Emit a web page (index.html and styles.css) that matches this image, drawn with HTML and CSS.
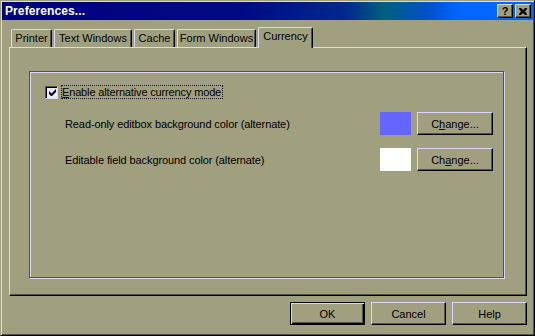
FILE: index.html
```html
<!DOCTYPE html>
<html lang="en">
<head>
    <meta charset="UTF-8">
    <title>Preferences...</title>
    <link rel="stylesheet" href="styles.css">
</head>
<body>
    <div class="window">
        <div class="titlebar">
            <span class="title">Preferences...</span>
            <div class="caption-buttons">
                <button class="cap-btn">?</button>
                <button class="cap-btn">
                    <svg width="8" height="7" viewBox="0 0 8 7">
                        <path d="M0 0h2l2 2 2-2h2v1L6 3.5 8 6v1H6L4 5 2 7H0V6l2-2.5L0 1z" fill="#000"/>
                    </svg>
                </button>
            </div>
        </div>
        <div class="client">
            <div class="tabs">
                <div class="tab tab-printer">Printer</div>
                <div class="tab tab-text">Text Windows</div>
                <div class="tab tab-cache">Cache</div>
                <div class="tab tab-form">Form Windows</div>
                <div class="tab tab-currency selected">Currency</div>
            </div>
            <div class="panel">
                <div class="groupbox">
                    <div class="check-row">
                        <span class="checkbox">
                            <svg width="7" height="7" viewBox="0 0 7 7">
                                <path d="M0 2v3l2 2h1l4-4V0L2.5 4.5z" fill="#000"/>
                            </svg>
                        </span>
                        <span class="focus-label"><u>E</u>nable alternative currency mode</span>
                    </div>
                    <div class="color-row">
                        <span class="row-label">Read-only editbox background color (alternate)</span>
                        <span class="swatch swatch-blue"></span>
                        <button class="btn">C<u>h</u>ange...</button>
                    </div>
                    <div class="color-row">
                        <span class="row-label">Editable field background color (alternate)</span>
                        <span class="swatch swatch-white"></span>
                        <button class="btn">Ch<u>a</u>nge...</button>
                    </div>
                </div>
            </div>
            <div class="footer">
                <button class="btn btn-footer btn-default">OK</button>
                <button class="btn btn-footer">Cancel</button>
                <button class="btn btn-footer">Help</button>
            </div>
        </div>
    </div>
</body>
</html>
```

FILE: styles.css
```css
body {
    margin: 0;
    background-color: #a09f80;
    font-family: "Liberation Sans", Arial, sans-serif;
    font-size: 11px;
    color: #000;
}
.window {
    width: 535px;
    height: 336px;
    box-sizing: border-box;
    padding: 1px;
    background-color: #a09f80;
    border: 1px solid;
    border-color: #a09f80 #000 #000 #a09f80;
    box-shadow: inset 1px 1px 0 #d8d8f8, inset -1px -1px 0 #55553f;
}
.titlebar {
    height: 18px;
    display: flex;
    align-items: center;
    justify-content: space-between;
    padding: 0 2px 0 3px;
    background: linear-gradient(to right, #000080 0%, #000a84 45%, #002a8c 65%, #00607f 72%, #0050c8 80%, #0066ff 86%, #0066ff 100%);
}
.title {
    color: #fff;
    font-weight: bold;
    font-size: 12px;
    letter-spacing: 0.1px;
}
.caption-buttons {
    display: flex;
    gap: 2px;
}
.cap-btn {
    width: 16px;
    height: 14px;
    padding: 0;
    margin: 0;
    display: flex;
    align-items: center;
    justify-content: center;
    background-color: #a09f80;
    border: 1px solid;
    border-color: #d8d8f8 #000 #000 #d8d8f8;
    box-shadow: inset -1px -1px 0 #55553f;
    font-family: "Liberation Sans", Arial, sans-serif;
    font-weight: bold;
    font-size: 11px;
    line-height: 11px;
    color: #000;
}
.client {
    padding: 7px 6px 0 7px;
}
.tabs {
    display: flex;
    align-items: flex-end;
    height: 20px;
    padding-left: 2px;
    gap: 2px;
}
.tab {
    height: 18px;
    box-sizing: border-box;
    display: flex;
    align-items: center;
    justify-content: center;
    padding-bottom: 1px;
    border-top: 1px solid #d8d8f8;
    border-left: 1px solid #d8d8f8;
    border-right: 1px solid #000;
    border-radius: 2px 2px 0 0;
    box-shadow: inset -1px 0 0 #55553f;
    white-space: nowrap;
}
.tab-printer { width: 41px; }
.tab-text { width: 78px; }
.tab-cache { width: 41px; }
.tab-form { width: 79px; }
.tab-currency { width: 55px; }
.tab.selected {
    height: 21px;
    margin-bottom: -1px;
    padding-bottom: 5px;
    position: relative;
    z-index: 1;
    background-color: #a09f80;
}
.panel {
    height: 249px;
    box-sizing: border-box;
    padding: 23px 18px 0 19px;
    border: 1px solid;
    border-color: #d8d8f8 #000 #000 #d8d8f8;
    box-shadow: inset -1px -1px 0 #55553f;
}
.groupbox {
    width: 475px;
    height: 207px;
    box-sizing: border-box;
    padding: 13px 0 0 15px;
    border: 1px solid #55553f;
    box-shadow: inset 1px 1px 0 #d8d8f8, 1px 1px 0 #d8d8f8;
}
.check-row {
    display: flex;
    align-items: center;
    height: 14px;
}
.checkbox {
    width: 13px;
    height: 13px;
    box-sizing: border-box;
    display: flex;
    align-items: center;
    justify-content: center;
    background-color: #e8e8ff;
    border: 1px solid;
    border-color: #55553f #d8d8f8 #d8d8f8 #55553f;
    box-shadow: inset 1px 1px 0 #000;
    margin-right: 3px;
    padding: 1px 0 0 1px;
}
.focus-label {
    height: 14px;
    box-sizing: border-box;
    border: 1px dotted #000;
    padding: 0 1px 0 0;
    line-height: 12px;
    letter-spacing: -0.15px;
}
.color-row {
    display: flex;
    align-items: center;
    margin-top: 13px;
    height: 23px;
}
.row-label {
    width: 335px;
    padding-left: 20px;
    box-sizing: border-box;
    letter-spacing: -0.1px;
}
.swatch {
    width: 31px;
    height: 23px;
    margin-right: 6px;
}
.swatch-blue { background-color: #6666ff; }
.swatch-white { background-color: #fff; }
.btn {
    width: 76px;
    height: 23px;
    padding: 0;
    margin: 0;
    background-color: #a09f80;
    border: 1px solid;
    border-color: #d8d8f8 #000 #000 #d8d8f8;
    box-shadow: inset -1px -1px 0 #55553f;
    font-family: "Liberation Sans", Arial, sans-serif;
    font-size: 11px;
    color: #000;
}
.footer {
    display: flex;
    justify-content: flex-end;
    gap: 6px;
    margin-top: 6px;
}
.btn-footer {
    width: 75px;
}
.btn-default {
    border: 1px solid #000;
    box-shadow: inset 1px 1px 0 #d8d8f8, inset -1px -1px 0 #000, inset -2px -2px 0 #55553f;
}
```
